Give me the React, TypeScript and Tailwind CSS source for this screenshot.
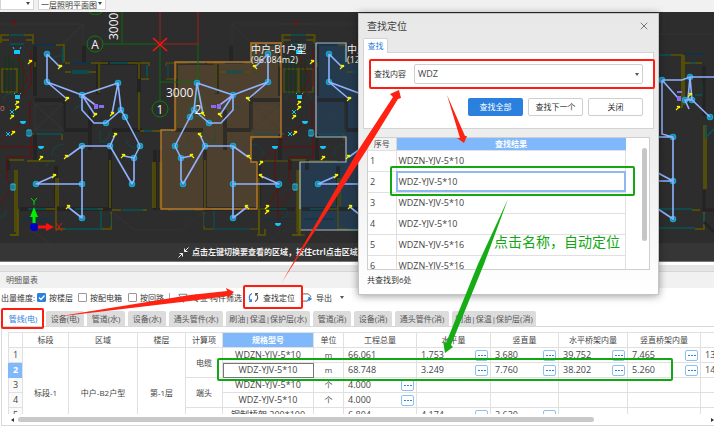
import React from "react";
import { Filter, X } from "lucide-react";

const FONT = "font-['Open_Sans','Noto_Sans_CJK_SC',sans-serif]";

type Point = [number, number];

const unitNodes: Point[] = [
  [47, 54], [47, 82], [82, 95], [118, 83], [121, 110], [125, 117], [106, 123],
  [82, 146], [110, 146], [140, 146], [134, 158], [132, 184], [82, 184], [36, 184], [82, 218],
];

const unitSwitches: Point[] = [
  [60, 67], [67, 99], [95, 115], [112, 114], [66, 157], [54, 176], [115, 135], [123, 156], [68, 207],
];

function Node({ x, y }: { x: number; y: number }) {
  return <circle cx={x} cy={y} r="2.6" stroke="#10a8d0" strokeWidth="1.3" fill="#2a7f9c" />;
}

function Switch({ x, y }: { x: number; y: number }) {
  return (
    <g stroke="#f4f400" fill="#f4f400" strokeWidth="1.1">
      <circle cx={x + 1} cy={y - 1} r="1.3" stroke="none" />
      <path d={`M${x - 2} ${y + 2}L${x + 1} ${y - 1}M${x - 1} ${y - 2}L${x + 1} ${y}`} />
    </g>
  );
}

function Walls() {
  return (
    <g fill="none">
      <g stroke="#232323" strokeWidth="4">
        <path d="M35 46v50M35 100h29M64 96v34M98 64v30M101 63h38v30M8 160v10M35 134v26M56 166v40M110 150v60M155 150v60M20 209h90M64 130h24M90 110v40M112 130h30M84 62v-16" />
      </g>
      <g stroke="#3b3b3b" strokeWidth="0.6">
        <path d="M0 24h83v20M83 24l-20 20M35 104h28v26h-28zM35 104l28 26M63 104l-28 26M112 212l22 18h26M30 230l20 13" />
      </g>
      <g stroke="#5c5600" strokeWidth="1.5">
        <path d="M1 43v-8h8M24 35h9v9M1 40h8M26 40h7M56 45h8v17M35 62v5M65 63h5M91 63h8v30M100 63h8M128 63h11v16M65 72h6M89 72h7M140 63h9v3M141 79h8M2 69h15v23h-15zM139 92v38M140 131h4M152 131h8M62 134v6M31 134h3M9 160h15M27 161h28M17 170v65h-7M15 170v62M56 178v52M58 178v28M110 160v48M155 162v46M153 162v46M46 209h9M98 209h5M112 210h9M143 210h4M56 229h9M101 229h10v-17" />
      </g>
      <g stroke="#075555" strokeWidth="1.6">
        <path d="M10 35h14M10 44h14M63 48v15M72 71h17M72 73h17M110 63h18M147 65v12M144 131h8M36 134h26M28 209h18M75 209h26M122 210h21M65 229h36v-18" />
        <path d="M3 100q5-12 14-2M52 156q0-11 12-12M46 167q2-7 10-7M100 130v12q9-1 10-10M126 140q2 8 10 8M50 63q2-8 12-7M74 110q6-8 12 0M0 218q5 0 6-8" strokeWidth="0.7" />
      </g>
      <path d="M35 45h21M72 63h18M22 219h30M110 214v12" stroke="#0a3550" strokeWidth="1.6" />
    </g>
  );
}

function Circuits() {
  return (
    <g fill="none">
      <path d="M82 95l15 11M82 95l13 8" stroke="#7a1a1a" />
      {unitNodes.map(([x, y]) => <Node key={`${x}-${y}`} x={x} y={y} />)}
      <g stroke="#8fb2ff" strokeWidth="1.6" strokeLinejoin="round">
        <path d="M47 54V82L82 95L118 83L121 110L125 117L137 140L140 146L134 158V180L132 184L110 146H82V218L68 207M47 54L60 67M47 82L67 99M82 95V110L94 123H106L121 110M82 95L95 115M82 95L98 107M118 83L112 114M82 146L67 157M82 184H36L54 176M110 146L115 135M134 158L124 156" />
      </g>
      <path d="M94 104h4v5h-4zM99 105h5v3h-5z" fill="#8a6cf0" />
      {unitSwitches.map(([x, y]) => <Switch key={`${x}-${y}`} x={x} y={y} />)}
    </g>
  );
}

function Core() {
  return (
    <g fill="none">
      <path d="M287 55v38M291 55v38M295 60v33M301 60v33M305 60v33" stroke="#0d3d12" />
      <path d="M259 209v26h6M257 235h8v-6M300 209v26h-8" stroke="#5c5600" strokeWidth="1.6" />
      <path
        d="M299 54L309 79L299 97M313 50V85L303 97M312 100V134M305 122L290 134L275 147H323M275 147L261 163M275 147V178L278 186V224M313 137V157H289V180L295 187L281 205M267 208L278 188"
        stroke="#6d0c0c"
      />
      <circle cx="296" cy="23" r="1.8" fill="#7a0c0c" />
      <g fill="#12c8fa">
        <path d="M296 50h6v4h-6zM297 95h5v4h-5zM302 121h6a3 3 0 0 1-6 0zM272 146h6a3 3 0 0 1-6 0zM320 146h6a3 3 0 0 1-6 0zM275 185h6a3 3 0 0 1-6 0zM275 223h6a3 3 0 0 1-6 0z" />
      </g>
      <path d="M309 130h4v6h-4zM293 184h4v6h-4zM311 130v6M295 184v6M288 132l4 4M292 132l-4 4M292 110l4 4M296 110l-4 4M296 49l-1-2M302 49l1-2M297 94l-1-1M302 94l1-1" stroke="#12c8fa" />
      {[[312, 62], [299, 103], [299, 108], [294, 117], [295, 133], [261, 163], [323, 158], [267, 207], [267, 212]].map(([x, y]) => (
        <Switch key={`${x}-${y}`} x={x} y={y} />
      ))}
    </g>
  );
}

function EastWing() {
  return (
    <g fill="none">
      <path d="M658 34h56M664 12v22" stroke="#3b3b3b" strokeWidth="0.6" />
      <path d="M671 55h11v53M684 55v50M684 63h18M704 125v64M706 125v64M692 210h8M704 212v17h-9" stroke="#5c5600" strokeWidth="1.6" />
      <path d="M658 55h13M690 63h6M658 209h34M704 214v10M658 228h37M703 83v12h-8M706 125v12l8-8" stroke="#075555" strokeWidth="1.6" />
      <path d="M684 54h20" stroke="#0a3550" strokeWidth="1.6" />
      <path d="M704 190v20h10M704 222l10 10M704 66v50" stroke="#232323" strokeWidth="3" />
      {[[662, 80], [690, 77], [685, 100], [692, 100], [710, 117], [673, 137], [673, 181], [673, 219]].map(([x, y]) => (
        <Node key={`${x}-${y}`} x={x} y={y} />
      ))}
      <path d="M662 80H682L690 77H714M662 80L678 98M690 77L688 99L692 100L710 117M690 77L692 100L685 100L689 109M662 80V134L673 137V219L658 209M658 137H673M658 173L673 181H658" stroke="#8fb2ff" strokeWidth="1.6" />
      <path d="M677 96h4v5h-4zM677 91h5v2h-5z" fill="#8a6cf0" />
      <Switch x={678} y={108} />
      <Switch x={690} y={95} />
    </g>
  );
}

function FloorPlan() {
  return (
    <svg viewBox="0 12 714 231" preserveAspectRatio="xMinYMin slice" className="block min-h-0 w-full flex-1">
      <path d="M251 43H281V137H251V162H257V209H161V130H175V62H251Z" fill="#4d402f" />
      <path d="M316 43H346V62H420V230H300V162H346V137H316Z" fill="#263a4d" />
      <Walls />
      <g transform="translate(315 0) scale(-1 1)" opacity="0.7"><Walls /></g>
      <g transform="translate(282 0)" opacity="0.7"><Walls /></g>
      <path d="M251 43H281V137H251V162H257V209H161V130H175V62H251Z" fill="none" stroke="#b9772a" strokeWidth="1.4" />
      <path d="M316 43H346V62M316 43V137H346V162H300V230H420" fill="none" stroke="#a9b6c6" strokeWidth="1.2" />
      <path d="M122 12V44M104 44H160V101M160 82H198V44M197 82V101" stroke="#0b6d0b" fill="none" />
      <path d="M160 12V44H198V12" stroke="#a32020" fill="none" />
      <path d="M153 38L167 51M167 38L153 51" stroke="#ff0f0f" strokeWidth="1.6" />
      <g fill="none" stroke="#0b7d0b">
        <circle cx="95" cy="44" r="8" />
        <circle cx="160" cy="109" r="8" />
        <circle cx="197" cy="109" r="8" opacity="0.4" />
        <path d="M89 12a7 4 0 0 0 13 0" />
      </g>
      <g transform="translate(-282 0)"><Core /></g>
      <Core />
      <Circuits />
      <g transform="translate(315 0) scale(-1 1)"><Circuits /></g>
      <g transform="translate(282 0)"><Circuits /></g>
      <EastWing />
      <g fill="#f2f2f2" className={FONT}>
        <text x="95" y="49" textAnchor="middle" className="text-[12px]">A</text>
        <text x="160" y="114" textAnchor="middle" className="text-[12px]">1</text>
        <text x="198" y="114" textAnchor="middle" className="text-[12px]">2</text>
        <text x="166" y="97" className="text-[12px]">3000</text>
        <text transform="translate(118 40) rotate(-90)" className="text-[12px]">3000</text>
        <text x="251" y="53" className="text-[10px]">中户-B1户型</text>
        <text x="251" y="63" className="text-[9px]">(96.084m2)</text>
        <text x="347" y="53" className="text-[10px]">中户-B2户型</text>
        <text x="347" y="63" className="text-[9px]">(121.36m2)</text>
        <text x="0" y="111" className="text-[8px]" fill="#c87070">0</text>
      </g>
      <path d="M34 227V213" stroke="#00ee00" strokeWidth="3" />
      <path d="M30 217L34 207L38 217Z" fill="#00ee00" />
      <path d="M34 227H48" stroke="#ff1010" strokeWidth="3" />
      <path d="M46 223L54 227L46 231Z" fill="#ff1010" />
      <circle cx="34" cy="227" r="4" fill="#0000c8" />
      <path d="M31 198L34 201.500L37 198M34 201V205" stroke="#00dd00" fill="none" />
      <path d="M56 223L62 231M62 223L56 231" stroke="#e01515" />
    </svg>
  );
}

const results = ["WDZN-YJV-5*10", "WDZ-YJV-5*10", "WDZN-YJV-5*10", "WDZ-YJV-5*10", "WDZN-YJV-5*16", "WDZN-YJV-5*16"];

function FindDialog() {
  return (
    <section
      role="dialog"
      aria-labelledby="find-title"
      className="absolute top-[13px] left-[358px] z-10 w-[301px] border border-[#c4c4c4] bg-linear-to-b from-[#e8e8e8] via-[#eeeeee] to-white px-1 pb-[9px] shadow-[0_1px_8px_rgba(0,0,0,0.4)]"
    >
      <header className="flex h-[24px] items-center justify-between px-1">
        <h2 id="find-title" className="text-[10px] text-[#3c3c3c]">查找定位</h2>
        <button aria-label="关闭窗口" className="text-[#777]"><X size={12} strokeWidth={2} /></button>
      </header>
      <div role="tablist" className="flex">
        <button role="tab" aria-selected="true" className="relative -mb-px h-[15px] w-[25px] rounded-t-xs border border-b-0 border-[#d2d2d2] bg-white text-[8px] leading-[14px] text-[#2f80e0]">
          查找
        </button>
      </div>
      <div className="border border-[#d4d4d4] bg-white px-[10px] pt-[11px] pb-[12px]">
        <div className="flex items-center gap-[7px]">
          <label htmlFor="find-text" className="w-[33px] shrink-0 text-[8px] whitespace-nowrap text-[#333]">查找内容</label>
          <div className="relative flex-1">
            <select id="find-text" className="block h-[20px] w-full appearance-none rounded-xs border border-[#cfcfcf] bg-white pl-[3px] text-[9px] text-[#444]">
              <option>WDZ</option>
            </select>
            <span className="pointer-events-none absolute top-[9px] right-1 border-x-2 border-t-3 border-x-transparent border-t-[#555]" />
          </div>
        </div>
        <div className="mt-[14px] flex justify-end gap-[5px] text-[8px]">
          <button className="h-[18px] w-[55px] rounded-xs bg-[#2b7fdd] text-white">查找全部</button>
          <button className="h-[18px] w-[55px] rounded-xs border border-[#cfcfcf] bg-white text-[#333]">查找下一个</button>
          <button className="h-[18px] w-[55px] rounded-xs border border-[#cfcfcf] bg-white text-[#333]">关闭</button>
        </div>
      </div>
      <div className="mx-1 mt-[8px] flex h-[133px] overflow-hidden border border-[#cfcfcf] bg-white">
        <table className="h-fit w-[258px] table-fixed border-collapse text-left text-[9px] leading-[12px] text-[#444]">
          <thead>
            <tr className="h-[12px] text-[8px] leading-[11px]">
              <th className="w-[28px] border-r border-[#d9d9d9] bg-[#f3f3f3] p-0 text-center font-normal">序号</th>
              <th className="bg-[#7fb9fb] p-0 text-center font-semibold text-white">查找结果</th>
            </tr>
          </thead>
          <tbody>
            {results.map((name, i) => (
              <tr key={i} className="h-[21px]">
                <td className="border border-l-0 border-[#e0e0e0] p-0 pl-[2px]">{i + 1}</td>
                <td className={i === 1 ? "border border-[#e0e0e0] p-0 pl-[2px] outline-2 -outline-offset-2 outline-[#8fb8ee]" : "border border-[#e0e0e0] p-0 pl-[2px]"}>{name}</td>
              </tr>
            ))}
          </tbody>
        </table>
        <div className="flex flex-1 justify-end pt-[10px] pr-[2px]">
          <div className="h-[93px] w-[5px] rounded-full bg-[#c6c6c6]" />
        </div>
      </div>
      <p className="mt-[5px] px-1 text-[8px] leading-[10px] text-[#333]">共查找到6处</p>
    </section>
  );
}

const tabs = [
  { name: "管线(电)", width: "w-[40px]" },
  { name: "设备(电)", width: "w-[38px]" },
  { name: "管道(水)", width: "w-[38px]" },
  { name: "设备(水)", width: "w-[38px]" },
  { name: "通头管件(水)", width: "w-[54px]" },
  { name: "刷油|保温|保护层(水)", width: "w-[84px]" },
  { name: "管道(消)", width: "w-[38px]" },
  { name: "设备(消)", width: "w-[38px]" },
  { name: "通头管件(消)", width: "w-[54px]" },
  { name: "刷油|保温|保护层(消)", width: "w-[84px]" },
];

const columns = [
  { name: "", width: "w-[14px]" },
  { name: "标段", width: "w-[46px]" },
  { name: "区域", width: "w-[69px]" },
  { name: "楼层", width: "w-[48px]" },
  { name: "计算项", width: "w-[37px]" },
  { name: "规格型号", width: "w-[91px]" },
  { name: "单位", width: "w-[30px]" },
  { name: "工程总量", width: "w-[73px]" },
  { name: "水平量", width: "w-[74px]" },
  { name: "竖直量", width: "w-[68px]" },
  { name: "水平桥架内量", width: "w-[69px]" },
  { name: "竖直桥架内量", width: "w-[73px]" },
  { name: "", width: "w-[60px]" },
];

type Quantity = { value: string; more?: boolean };

const q = (value: string, more = true): Quantity => ({ value, more });
const none: Quantity = { value: "", more: false };

const rows: { spec: string; unit: string; quantities: Quantity[] }[] = [
  { spec: "WDZN-YJV-5*10", unit: "m", quantities: [q("66.061", false), q("1.753"), q("3.680"), q("39.752"), q("7.465"), q("13.411", false)] },
  { spec: "WDZ-YJV-5*10", unit: "m", quantities: [q("68.748", false), q("3.249"), q("7.760"), q("38.202"), q("5.260"), q("14.277", false)] },
  { spec: "WDZN-YJV-5*10", unit: "个", quantities: [q("4.000"), none, none, none, none, none] },
  { spec: "WDZ-YJV-5*10", unit: "个", quantities: [q("4.000"), none, none, none, none, none] },
  { spec: "钢制桥架 200*100", unit: "m", quantities: [q("6.804", false), q("4.174"), q("2.630"), none, none, none] },
  { spec: "", unit: "", quantities: [none, none, none, none, none, none] },
];

const items = ["电缆", "端头", ""];
const CELL = "border border-[#e0e0e0] p-0";

function QuantityCell({ value, more }: Quantity) {
  return (
    <td className={CELL}>
      <div className="flex h-[14px] items-center justify-between pr-[2px] pl-1 text-[9px]">
        <span>{value}</span>
        {more && (
          <button aria-label="查看明细" className="flex h-[11px] w-[13px] items-center justify-center gap-px rounded-xs border border-[#8cc0f0] bg-white">
            <i className="h-px w-[2px] bg-[#2f80d0]" />
            <i className="h-px w-[2px] bg-[#2f80d0]" />
            <i className="h-px w-[2px] bg-[#2f80d0]" />
          </button>
        )}
      </div>
    </td>
  );
}

function QuantityTable() {
  return (
    <div className="ml-[6px] h-[82px] overflow-hidden">
      <table className="w-[752px] table-fixed border-collapse text-center text-[8px] leading-[10px] text-[#444]">
        <thead>
          <tr className="h-[15px]">
            {columns.map((c, i) => (
              <th key={i} className={`${CELL} ${c.width} ${c.name === "规格型号" ? "bg-[#7fb9fb] font-semibold text-white" : "font-normal"}`}>{c.name}</th>
            ))}
          </tr>
        </thead>
        <tbody>
          {rows.map((row, i) => (
            <tr key={i} className="h-[15px]">
              <td className={i === 1 ? "border border-[#7fb9fb] bg-[#7fb9fb] p-0 text-[9px] font-bold text-white" : `${CELL} bg-[#fafafa] text-[9px]`}>{i + 1}</td>
              {i === 0 && <td rowSpan={6} className={CELL}>标段-1</td>}
              {i === 0 && <td rowSpan={6} className={CELL}>中户-B2户型</td>}
              {i === 0 && <td rowSpan={6} className={CELL}>第-1层</td>}
              {i % 2 === 0 && <td rowSpan={2} className={CELL}>{items[i / 2]}</td>}
              <td className={i === 1 ? `${CELL} text-[9px] outline -outline-offset-1 outline-[#777]` : `${CELL} text-[9px]`}>{row.spec}</td>
              <td className={CELL}>{row.unit}</td>
              {row.quantities.map((item, k) => <QuantityCell key={k} {...item} />)}
            </tr>
          ))}
        </tbody>
      </table>
    </div>
  );
}

function CheckOption({ label, checked = false }: { label: string; checked?: boolean }) {
  return (
    <label className="flex w-[50px] items-center gap-[3px]">
      <span className="relative flex">
        <input type="checkbox" defaultChecked={checked} className="peer size-[9px] appearance-none rounded-[1px] border border-[#999] bg-white checked:border-[#2b7fdd] checked:bg-[#2b7fdd]" />
        <svg viewBox="0 0 9 9" className="pointer-events-none absolute inset-0 hidden size-[9px] peer-checked:block">
          <path d="M2 4.500L4 6.500L7.500 2.500" fill="none" stroke="white" strokeWidth="1.3" />
        </svg>
      </span>
      {label}
    </label>
  );
}

function DetailPanel() {
  return (
    <section className="shrink-0 bg-white">
      <div className="h-[7px] border-b border-[#d6d6d6] bg-[#e5e5e5]" />
      <h2 className="h-[16px] bg-[#f1f1f1] pl-[6px] text-[8px] leading-[16px] text-[#555]">明细量表</h2>
      <div className="flex h-[23px] items-center pb-1 pl-px text-[8px] whitespace-nowrap text-[#333]">
        <span className="w-[36px]">出量维度:</span>
        <div className="w-[41px]"><CheckOption label="按楼层" checked /></div>
        <CheckOption label="按配电箱" />
        <div className="w-[41px]"><CheckOption label="按回路" /></div>
        <span className="mr-[8px] h-[9px] w-px bg-[#aaa]" />
        <button className="flex w-[70px] items-center gap-1"><Filter size={10} strokeWidth={1.5} />专业·构件筛选</button>
        <button className="flex w-[55px] items-center gap-1">
          <svg viewBox="0 0 11 11" className="size-[11px]" fill="none" strokeWidth="1.2">
            <path d="M4 1.500A4.500 4.500 0 0 0 3 9.200M1 9.500H3.300V7.200" stroke="#2f80e0" />
            <path d="M7 9.500A4.500 4.500 0 0 0 8 1.800M10 1.500H7.700V3.800" stroke="#555" />
          </svg>
          查找定位
        </button>
        <button className="flex items-center gap-1">
          <svg viewBox="0 0 10 11" className="h-[11px] w-[9px]" fill="none">
            <path d="M0 1.500H6L8.500 4V5M0 9.500H5" stroke="#555" />
            <path d="M5 9.500Q5 7 8 7M6.500 5L9.500 7L6.500 9Z" stroke="#2f80e0" fill="#2f80e0" />
          </svg>
          导出
          <span className="ml-1 border-x-2 border-t-3 border-x-transparent border-t-[#555]" />
        </button>
      </div>
      <div role="tablist" className="flex h-[15px] gap-[3px] pl-[3px] text-[8px] whitespace-nowrap">
        {tabs.map((tab, i) => (
          <button
            key={tab.name}
            role="tab"
            aria-selected={i === 0}
            className={`${tab.width} shrink-0 rounded-t-xs ${i === 0 ? "bg-white text-[#2f80e0]" : "bg-[#dcdcdc] text-[#555]"}`}
          >
            {tab.name}
          </button>
        ))}
      </div>
      <div className="ml-px border border-r-0 border-[#d8d8d8] pt-[5px]">
        <QuantityTable />
        <div className="flex h-[11px] items-center pl-[9px]">
          <span className="border-y-2 border-r-3 border-y-transparent border-r-[#333]" />
          <span className="ml-1 h-[5px] w-[82%] rounded-full bg-[#c9c9c9]" />
          <span className="flex-1" />
          <span className="border-y-2 border-l-3 border-y-transparent border-l-[#333]" />
        </div>
      </div>
    </section>
  );
}

function Annotations() {
  return (
    <div className="pointer-events-none absolute inset-0 z-20">
      <svg viewBox="0 0 714 426" className="h-[426px] w-[714px]" fill="none">
        <g stroke="#ff1c10" strokeWidth="2">
          <rect x="370" y="60" width="284" height="28" rx="1" />
          <rect x="244" y="286" width="58" height="22" rx="1" />
          <rect x="2" y="309" width="41" height="19" rx="1" />
        </g>
        <g fill="#ff2212">
          <path d="M55 317L190 295L227 291L226 288L234 292L228 298L227 296L190 301Z" />
          <path d="M282 282L359 149L393 97L390 94L399 90L401 98L398 99L366 151Z" />
          <path d="M447 95L460 138L457 138L464 143L467 136L465 136Z" />
        </g>
        <g stroke="#12a812" strokeWidth="2">
          <rect x="391" y="167" width="243" height="28" rx="1" />
          <rect x="218" y="359" width="454" height="21" rx="1" />
        </g>
        <path d="M508 199L478 264L446 343L443 341L445 353L453 347L451 345L484 264Z" fill="#16ac16" />
      </svg>
      <p className="absolute top-[232px] left-[494px] text-[14px] leading-[20px] whitespace-nowrap text-[#12a812]">点击名称，自动定位</p>
    </div>
  );
}

export default function App() {
  return (
    <main className={`relative flex h-screen flex-col overflow-hidden bg-white ${FONT}`}>
      <header className="flex h-[12px] shrink-0 items-start gap-1 bg-[#f1f1f1] text-[8px]">
        <div className="relative">
          <select aria-label="楼层" className="block h-[10px] w-[34px] appearance-none border border-t-0 border-[#d5d5d5] bg-white"><option></option></select>
          <span className="pointer-events-none absolute top-[2px] right-1 border-x-2 border-t-3 border-x-transparent border-t-[#444]" />
        </div>
        <div className="relative">
          <select aria-label="图纸" className="block h-[10px] w-[68px] appearance-none border border-t-0 border-[#d5d5d5] bg-white pl-[2px] leading-[8px] text-[#333]">
            <option>一层照明平面图</option>
          </select>
          <span className="pointer-events-none absolute top-[2px] right-1 border-x-2 border-t-3 border-x-transparent border-t-[#444]" />
        </div>
      </header>
      <section className="flex min-h-0 flex-1 flex-col bg-[#2d2d2d]">
        <FloorPlan />
        <div className="flex h-[19px] shrink-0 items-center gap-[3px] border-b border-[#777] bg-[#363636] pl-[178px] text-[8px] font-bold whitespace-nowrap text-[#f0f0f0]">
          <svg viewBox="0 0 11 11" className="size-[11px]" fill="none" stroke="#f0f0f0">
            <path d="M0.500 10.500L4.500 6.500M1.500 6.500H4.500V9.500M10.500 0.500L6.500 4.500M6.500 1.500V4.500H9.500" />
          </svg>
          点击左键切换要查看的区域，按住ctrl点击区域多选
        </div>
      </section>
      <div className="h-[3px] shrink-0 bg-white" />
      <DetailPanel />
      <FindDialog />
      <Annotations />
    </main>
  );
}
